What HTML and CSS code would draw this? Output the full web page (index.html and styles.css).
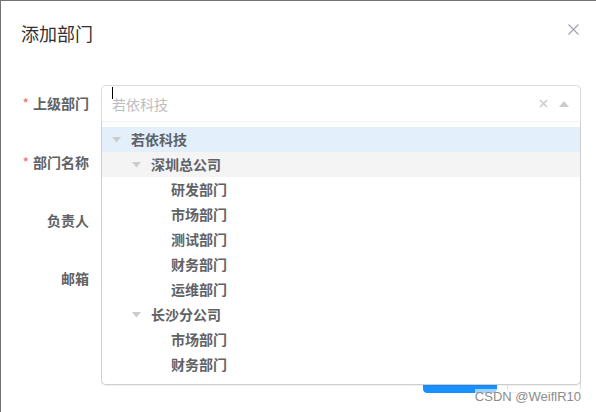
FILE: index.html
```html
<!DOCTYPE html>
<html lang="zh">
<head>
<meta charset="utf-8">
<title>添加部门</title>
<link rel="stylesheet" href="styles.css">
</head>
<body>
<div class="dialog">
  <div class="header">
    <span class="title">添加部门</span>
    <button class="close" aria-label="关闭">
      <svg width="11" height="11" viewBox="0 0 11 11"><path d="M0.5 0.5L10.5 10.5M10.5 0.5L0.5 10.5" stroke="#a0a3a9" stroke-width="1.1" fill="none"/></svg>
    </button>
  </div>
  <div class="body">
    <form class="form">
      <div class="item">
        <label class="label required">上级部门</label>
        <div class="content">
          <div class="treeselect">
            <div class="control">
              <span class="cursor"></span>
              <span class="placeholder">若依科技</span>
              <span class="ctl-icons">
                <svg class="clear" width="9" height="9" viewBox="0 0 9 9"><path d="M1 1L8 8M8 1L1 8" stroke="#cccccc" stroke-width="1.6" fill="none"/></svg>
                <svg class="up" width="10" height="6" viewBox="0 0 10 6"><polygon points="0,6 10,6 5,0" fill="#cccccc"/></svg>
              </span>
            </div>
            <div class="menu">
              <div class="option selected lv1"><span class="arrow"><svg width="9" height="6" viewBox="0 0 9 6"><polygon points="0,0 9,0 4.5,5.5" fill="#cccccc"/></svg></span><span class="olabel">若依科技</span></div>
              <div class="option hover lv2"><span class="arrow"><svg width="9" height="6" viewBox="0 0 9 6"><polygon points="0,0 9,0 4.5,5.5" fill="#cccccc"/></svg></span><span class="olabel">深圳总公司</span></div>
              <div class="option lv3"><span class="arrow"></span><span class="olabel">研发部门</span></div>
              <div class="option lv3"><span class="arrow"></span><span class="olabel">市场部门</span></div>
              <div class="option lv3"><span class="arrow"></span><span class="olabel">测试部门</span></div>
              <div class="option lv3"><span class="arrow"></span><span class="olabel">财务部门</span></div>
              <div class="option lv3"><span class="arrow"></span><span class="olabel">运维部门</span></div>
              <div class="option lv2"><span class="arrow"><svg width="9" height="6" viewBox="0 0 9 6"><polygon points="0,0 9,0 4.5,5.5" fill="#cccccc"/></svg></span><span class="olabel">长沙分公司</span></div>
              <div class="option lv3"><span class="arrow"></span><span class="olabel">市场部门</span></div>
              <div class="option lv3"><span class="arrow"></span><span class="olabel">财务部门</span></div>
            </div>
          </div>
        </div>
      </div>
      <div class="item">
        <label class="label required">部门名称</label>
        <div class="content"><input class="input" placeholder="请输入部门名称"></div>
      </div>
      <div class="item">
        <label class="label">负责人</label>
        <div class="content"><input class="input" placeholder="请输入负责人"></div>
      </div>
      <div class="item">
        <label class="label">邮箱</label>
        <div class="content"><input class="input" placeholder="请输入邮箱"></div>
      </div>
    </form>
  </div>
  <div class="footer">
    <button class="btn primary">确 定</button>
    <button class="btn">取 消</button>
  </div>
</div>
<div class="watermark">CSDN @WeiflR10</div>
</body>
</html>
```
FILE: styles.css
```css
html, body {
  margin: 0;
  padding: 0;
  width: 596px;
  height: 412px;
  overflow: hidden;
  background: #ffffff;
  font-family: "Noto Sans CJK SC", "Noto Sans", sans-serif;
}
body {
  position: relative;
}
.dialog {
  width: 600px;
  height: 411px;
  border-top: 1px solid #737373;
  border-left: 1px solid #737373;
  background: #fff;
  box-sizing: content-box;
}
.header {
  position: relative;
  padding: 20px 20px 10px;
}
.title {
  display: block;
  font-size: 18px;
  line-height: 24px;
  color: #303133;
}
.close {
  position: absolute;
  top: 20px;
  right: 20px;
  width: 16px;
  height: 16px;
  padding: 0;
  border: 0;
  background: none;
  display: flex;
  align-items: center;
  justify-content: center;
}
.body {
  padding: 30px 20px;
}
.form {
  margin: 0;
}
.item {
  display: flex;
  margin-bottom: 22.5px;
  height: 36px;
}
.item:nth-child(4) {
  margin-top: -1px;
}
.label {
  width: 80px;
  box-sizing: border-box;
  padding-right: 12px;
  text-align: right;
  font-size: 14px;
  font-weight: bold;
  color: #606266;
  line-height: 36px;
}
.label.required::before {
  content: "*";
  color: #f56c6c;
  margin-right: 4px;
  font-weight: normal;
}
.content {
  flex: 1;
  position: relative;
}
.input {
  width: 100%;
  height: 36px;
  box-sizing: border-box;
  border: 1px solid #dcdfe6;
  border-radius: 4px;
  padding: 0 15px;
  font: inherit;
  font-size: 14px;
}
.treeselect {
  position: relative;
  z-index: 5;
}
.control {
  position: relative;
  height: 36px;
  box-sizing: border-box;
  border: 1px solid #dddddd;
  border-bottom: 0;
  border-radius: 5px 5px 0 0;
  display: flex;
  align-items: center;
  padding-left: 10px;
  background: #fff;
}
.cursor {
  position: absolute;
  left: 10px;
  top: 1px;
  width: 1px;
  height: 12px;
  background: #000;
}
.placeholder {
  flex: 1;
  font-size: 14px;
  color: #bdbdbd;
  line-height: 36px;
}
.ctl-icons {
  display: flex;
  align-items: center;
  gap: 11px;
  padding-right: 11px;
}
.clear {
  display: block;
}
.up {
  display: block;
}
.menu {
  position: absolute;
  left: 0;
  right: 0;
  top: 36px;
  background: #fff;
  border: 1px solid #cfcfcf;
  border-top: 1px solid #f2f2f2;
  border-radius: 0 0 5px 5px;
  padding: 5px 0 7px;
  box-sizing: border-box;
  box-shadow: 0 1px 0 rgba(0,0,0,0.06);
}
.option {
  display: flex;
  align-items: center;
  height: 25px;
  padding-left: 10px;
  font-size: 14px;
  font-weight: bold;
  color: #606266;
}
.option.lv2 { padding-left: 30px; }
.option.lv3 { padding-left: 50px; }
.option.selected { background: #e3f0fc; }
.option.hover { background: #f4f4f4; }
.arrow {
  width: 19px;
  flex: none;
  display: flex;
  align-items: center;
}
.arrow svg { display: block; }
.olabel {
  line-height: 25px;
}
.footer {
  padding: 9px 20px 20px;
  display: flex;
  justify-content: flex-end;
  gap: 10px;
}
.btn {
  width: 74px;
  height: 36px;
  border: 1px solid #dcdfe6;
  border-radius: 4px;
  background: #fff;
  color: #606266;
  font: inherit;
  font-size: 14px;
}
.btn.primary {
  background: #1890ff;
  border-color: #1890ff;
  color: #fff;
}
.watermark {
  position: absolute;
  right: 15px;
  bottom: 8px;
  font-family: "Liberation Sans", Arial, sans-serif;
  font-size: 13px;
  line-height: 15px;
  color: #8c8c8c;
  background: rgba(255,255,255,0.6);
  z-index: 10;
}
```
